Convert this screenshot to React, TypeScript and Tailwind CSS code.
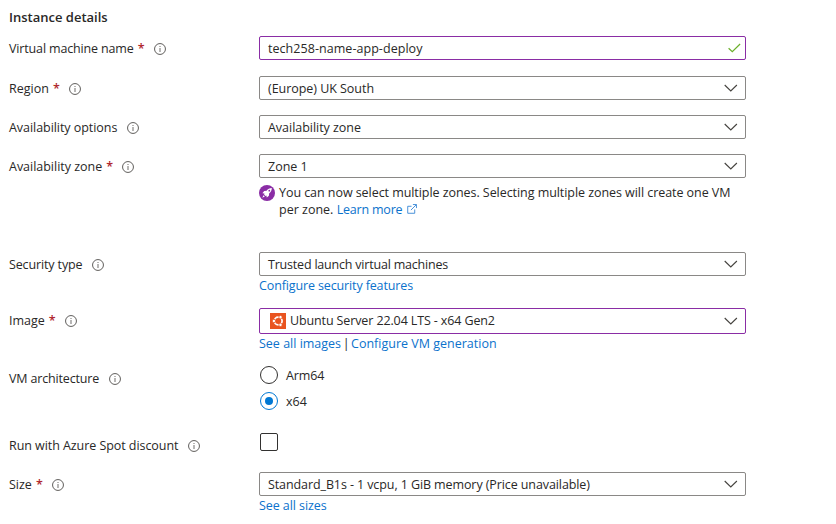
import type { ReactNode } from "react";

function InfoIcon({ className = "" }: { className?: string }) {
  return (
    <svg viewBox="0 0 12 12" className={`mt-px size-3 shrink-0 ${className}`} fill="none">
      <circle cx="6" cy="6" r="5.45" stroke="#605e5c" strokeWidth="1" />
      <path d="M6 5V9M6 3V4.1" stroke="#7d7b79" strokeWidth="1.1" />
    </svg>
  );
}

function Chevron() {
  return (
    <svg viewBox="0 0 14 8" className="mr-[7px] h-2 w-3.5 shrink-0" fill="none">
      <path d="M0.7 1L6.8 7L12.9 1" stroke="#45433f" strokeWidth="1.1" />
    </svg>
  );
}

function Row({
  label,
  tracking = "",
  required = false,
  className,
  children,
}: {
  label: string;
  tracking?: string;
  required?: boolean;
  className: string;
  children: ReactNode;
}) {
  return (
    <div className={`flex items-start ${className}`}>
      <div className="flex h-6 w-[250px] shrink-0 items-center whitespace-nowrap">
        <span className={tracking}>{label}</span>
        {required && <span className="ml-1 w-1.5 font-semibold text-[#b0282f]">*</span>}
        <InfoIcon className="ml-[10px]" />
      </div>
      <div className="w-[487px] shrink-0">{children}</div>
    </div>
  );
}

function Field({
  value,
  tracking = "",
  border = "border-[#8a8886]",
  height = "h-6",
  icon,
  trailing = <Chevron />,
}: {
  value: string;
  tracking?: string;
  border?: string;
  height?: string;
  icon?: ReactNode;
  trailing?: ReactNode;
}) {
  return (
    <div className={`flex items-center rounded-[2px] border bg-white pl-2 ${border} ${height}`}>
      {icon}
      <span className={`whitespace-nowrap ${tracking}`}>{value}</span>
      <span className="ml-auto flex items-center">{trailing}</span>
    </div>
  );
}

function Link({ children, className = "" }: { children: ReactNode; className?: string }) {
  return <a className={`text-[#0b72cc] ${className}`}>{children}</a>;
}

function Check() {
  return (
    <svg viewBox="0 0 13 10" className="mr-1 h-2.5 w-[13px]" fill="none">
      <path d="M0.6 5.2L4.3 8.7L12.1 1" stroke="#6bb02b" strokeWidth="1.2" />
    </svg>
  );
}

function UbuntuIcon() {
  return (
    <svg viewBox="0 0 16 16" className="mr-1 ml-0.5 size-4 shrink-0">
      <path fill="#e95420" d="M0 0h16v16H0z" />
      <circle cx="8.2" cy="8" r="3.9" fill="none" stroke="#fff" strokeWidth="1.7" />
      <g fill="#fff" stroke="#e95420" strokeWidth="0.8">
        <circle cx="3.9" cy="8" r="1.7" />
        <circle cx="10.5" cy="4.1" r="1.7" />
        <circle cx="10.5" cy="11.9" r="1.7" />
      </g>
    </svg>
  );
}

function RocketIcon() {
  return (
    <svg viewBox="0 0 16 16" className="mt-px size-4 shrink-0">
      <circle cx="8" cy="8" r="8" fill="#8a2da5" />
      <path
        fill="#fff"
        d="M12.8 3.1C10.5 3.1 8.9 4 7.6 5.8L5.2 6L3.4 8.3L5.5 8.6L5.1 9.6L6.4 10.9L7.4 10.5L7.8 12.6L9.9 10.8L10.1 8.4C12 7 12.8 5.4 12.8 3.1ZM4.5 10.2L3.3 12.7L5.8 11.5Z"
      />
      <circle cx="10.3" cy="5.7" r="0.9" fill="#8a2da5" />
    </svg>
  );
}

function ExternalIcon() {
  return (
    <svg
      viewBox="0 0 11 11"
      className="ml-[5px] inline-block size-2.5 align-[0px]"
      fill="none"
      stroke="#2f82d4"
      strokeWidth="0.95"
    >
      <path d="M5 2.5H0.8V10.2H8.5V6M6.5 0.6H10.4V4.5M10.2 0.8L4.3 6.7" />
    </svg>
  );
}

function Radio({ label, checked = false, tracking = "" }: { label: string; checked?: boolean; tracking?: string }) {
  return (
    <div className="flex h-[18px] items-center gap-2 pl-px">
      <span
        className={`flex size-[18px] items-center justify-center rounded-full border ${
          checked ? "border-[#0078d4]" : "border-[#323130]"
        }`}
      >
        {checked && <span className="size-2 rounded-full bg-[#0078d4]" />}
      </span>
      <span className={tracking}>{label}</span>
    </div>
  );
}

export default function App() {
  return (
    <main className="h-[524px] w-[836px] overflow-hidden bg-white pl-[9px] font-['Open_Sans','Noto_Sans',sans-serif] text-[12.5px] leading-[17px] text-[#292827]">
      <h2 className="h-9 pt-[9px] text-[13px] font-semibold">Instance details</h2>

      <Row label="Virtual machine name" tracking="tracking-[-0.15px]" required className="h-10">
        <Field
          value="tech258-name-app-deploy"
          tracking="tracking-[0.05px]"
          border="border-[#8a2da5]"
          trailing={<Check />}
        />
      </Row>
      <Row label="Region" required className="h-[39px]">
        <Field value="(Europe) UK South" tracking="tracking-[-0.04px]" />
      </Row>
      <Row label="Availability options" tracking="tracking-[-0.05px]" className="h-[39px]">
        <Field value="Availability zone" tracking="tracking-[-0.03px]" />
      </Row>
      <Row label="Availability zone" tracking="tracking-[-0.02px]" required className="h-[98px]">
        <Field value="Zone 1" />
        <div className="flex gap-1 pt-1.5 whitespace-nowrap">
          <RocketIcon />
          <div>
            <p className="tracking-[-0.057px]">
              You can now select multiple zones. Selecting multiple zones will create one VM
            </p>
            <p>
              per zone. <Link className="tracking-[-0.2px]">Learn more</Link>
              <ExternalIcon />
            </p>
          </div>
        </div>
      </Row>
      <Row label="Security type" tracking="tracking-[-0.13px]" className="h-14">
        <Field value="Trusted launch virtual machines" tracking="tracking-[-0.2px]" />
        <p className="pt-px">
          <Link className="tracking-[-0.13px]">Configure security features</Link>
        </p>
      </Row>
      <Row label="Image" required className="h-[58px]">
        <Field
          value="Ubuntu Server 22.04 LTS - x64 Gen2"
          tracking="pb-px tracking-[-0.12px]"
          border="border-[#8a2da5]"
          height="h-[26px]"
          icon={<UbuntuIcon />}
        />
        <p className="pt-px">
          <Link>See all images</Link>
          <span className="[word-spacing:-1.7px]"> | </span>
          <Link>Configure VM generation</Link>
        </p>
      </Row>
      <Row label="VM architecture" tracking="tracking-[-0.16px]" className="h-[67px]">
        <div className="flex flex-col gap-2">
          <Radio label="Arm64" tracking="tracking-[-0.15px]" />
          <Radio label="x64" checked />
        </div>
      </Row>
      <Row label="Run with Azure Spot discount" tracking="tracking-[-0.06px]" className="h-[39px]">
        <div className="ml-px size-[18px] rounded-[2px] border border-[#323130]" />
      </Row>
      <Row label="Size" required className="h-[52px]">
        <Field
          value="Standard_B1s - 1 vcpu, 1 GiB memory (Price unavailable)"
          tracking="tracking-[-0.095px]"
        />
        <p className="pt-px">
          <Link className="tracking-[-0.08px]">See all sizes</Link>
        </p>
      </Row>
    </main>
  );
}
